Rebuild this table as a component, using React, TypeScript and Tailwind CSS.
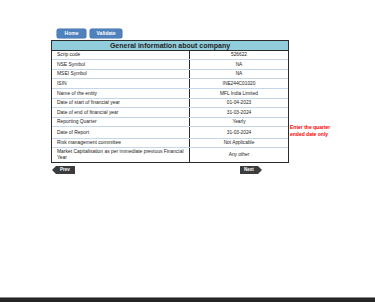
import React from "react";

// rows of the general information sheet
const rows: { label: string; value: string; h: string }[] = [
  { label: "Scrip code", value: "526622", h: "h-[9px]" },
  { label: "NSE Symbol", value: "NA", h: "h-[10px]" },
  { label: "MSEI Symbol", value: "NA", h: "h-[9px]" },
  { label: "ISIN", value: "INE244C01020", h: "h-[10px]" },
  { label: "Name of the entity", value: "MFL India Limited", h: "h-[10px]" },
  { label: "Date of start of financial year", value: "01-04-2023", h: "h-[9px]" },
  { label: "Date of end of financial year", value: "31-03-2024", h: "h-[10px]" },
  { label: "Reporting Quarter", value: "Yearly", h: "h-[9px]" },
  { label: "Date of Report", value: "31-03-2024", h: "h-[12px]" },
  { label: "Risk management committee", value: "Not Applicable", h: "h-[9px]" },
  {
    label: "Market Capitalisation as per immediate previous Financial Year",
    value: "Any other",
    h: "h-[14px]",
  },
];

export default function App() {
  return (
    <div className="relative w-[375px] h-[302px] bg-white overflow-hidden font-['Liberation_Sans',Arial,sans-serif]">
      <div className="pt-[29px] pl-[51px]">
        {/* top buttons */}
        <div className="flex gap-[4px] pl-[6px]">
          <button className="w-[29px] h-[9px] rounded-[2px] bg-[#4f81bd] text-white text-[5px] font-bold leading-[9px] shadow-[0_0_0_0.5px_#3a6aa5]">
            Home
          </button>
          <button className="w-[32px] h-[9px] rounded-[2px] bg-[#4f81bd] text-white text-[5px] font-bold leading-[9px] shadow-[0_0_0_0.5px_#3a6aa5]">
            Validate
          </button>
        </div>

        <div className="flex mt-[2px]">
          <div className="w-[238px] border border-[#2b2b2b]">
            <div className="h-[10px] bg-[#92cddc] border-b border-[#2b2b2b] text-center text-[7px] font-bold text-[#1f1f1f] leading-[10px]">
              General information about company
            </div>
            {rows.map((r, i) => (
              <div
                key={r.label}
                className={`flex ${r.h} ${i < rows.length - 1 ? "border-b border-[#c5d6ea]" : ""}`}
              >
                <div className="w-[138px] border-r border-[#2b2b2b] pl-[5px] pr-[1px] flex items-center text-[4.95px] leading-[6px] text-[#222]">
                  {r.label}
                </div>
                <div className="flex-1 flex items-center justify-center text-[4.8px] text-[#222]">
                  {r.value}
                </div>
              </div>
            ))}
          </div>
          <div className="mt-[84px] ml-[1px] text-[5px] leading-[7px] font-bold text-[#ff0000]">
            Enter the quarter
            <br />
            ended date only
          </div>
        </div>

        {/* prev / next */}
        <div className="flex w-[238px] mt-[3px]">
          <div className="ml-[1px] w-[23px] h-[8px] bg-[#3c3c3c] text-white text-[4.5px] font-bold leading-[8px] pl-[8px] [clip-path:polygon(0_50%,4px_0,100%_0,100%_100%,4px_100%)]">
            Prev
          </div>
          <div className="ml-auto mr-[27px] w-[22px] h-[8px] bg-[#3c3c3c] text-white text-[4.5px] font-bold leading-[8px] pl-[4px] [clip-path:polygon(0_0,calc(100%-4px)_0,100%_50%,calc(100%-4px)_100%,0_100%)]">
            Next
          </div>
        </div>
      </div>

      {/* bottom bar */}
      <div className="absolute left-0 right-0 bottom-0 h-[5px] bg-[#262626] border-t border-[#8a8a8a]" />
    </div>
  );
}
